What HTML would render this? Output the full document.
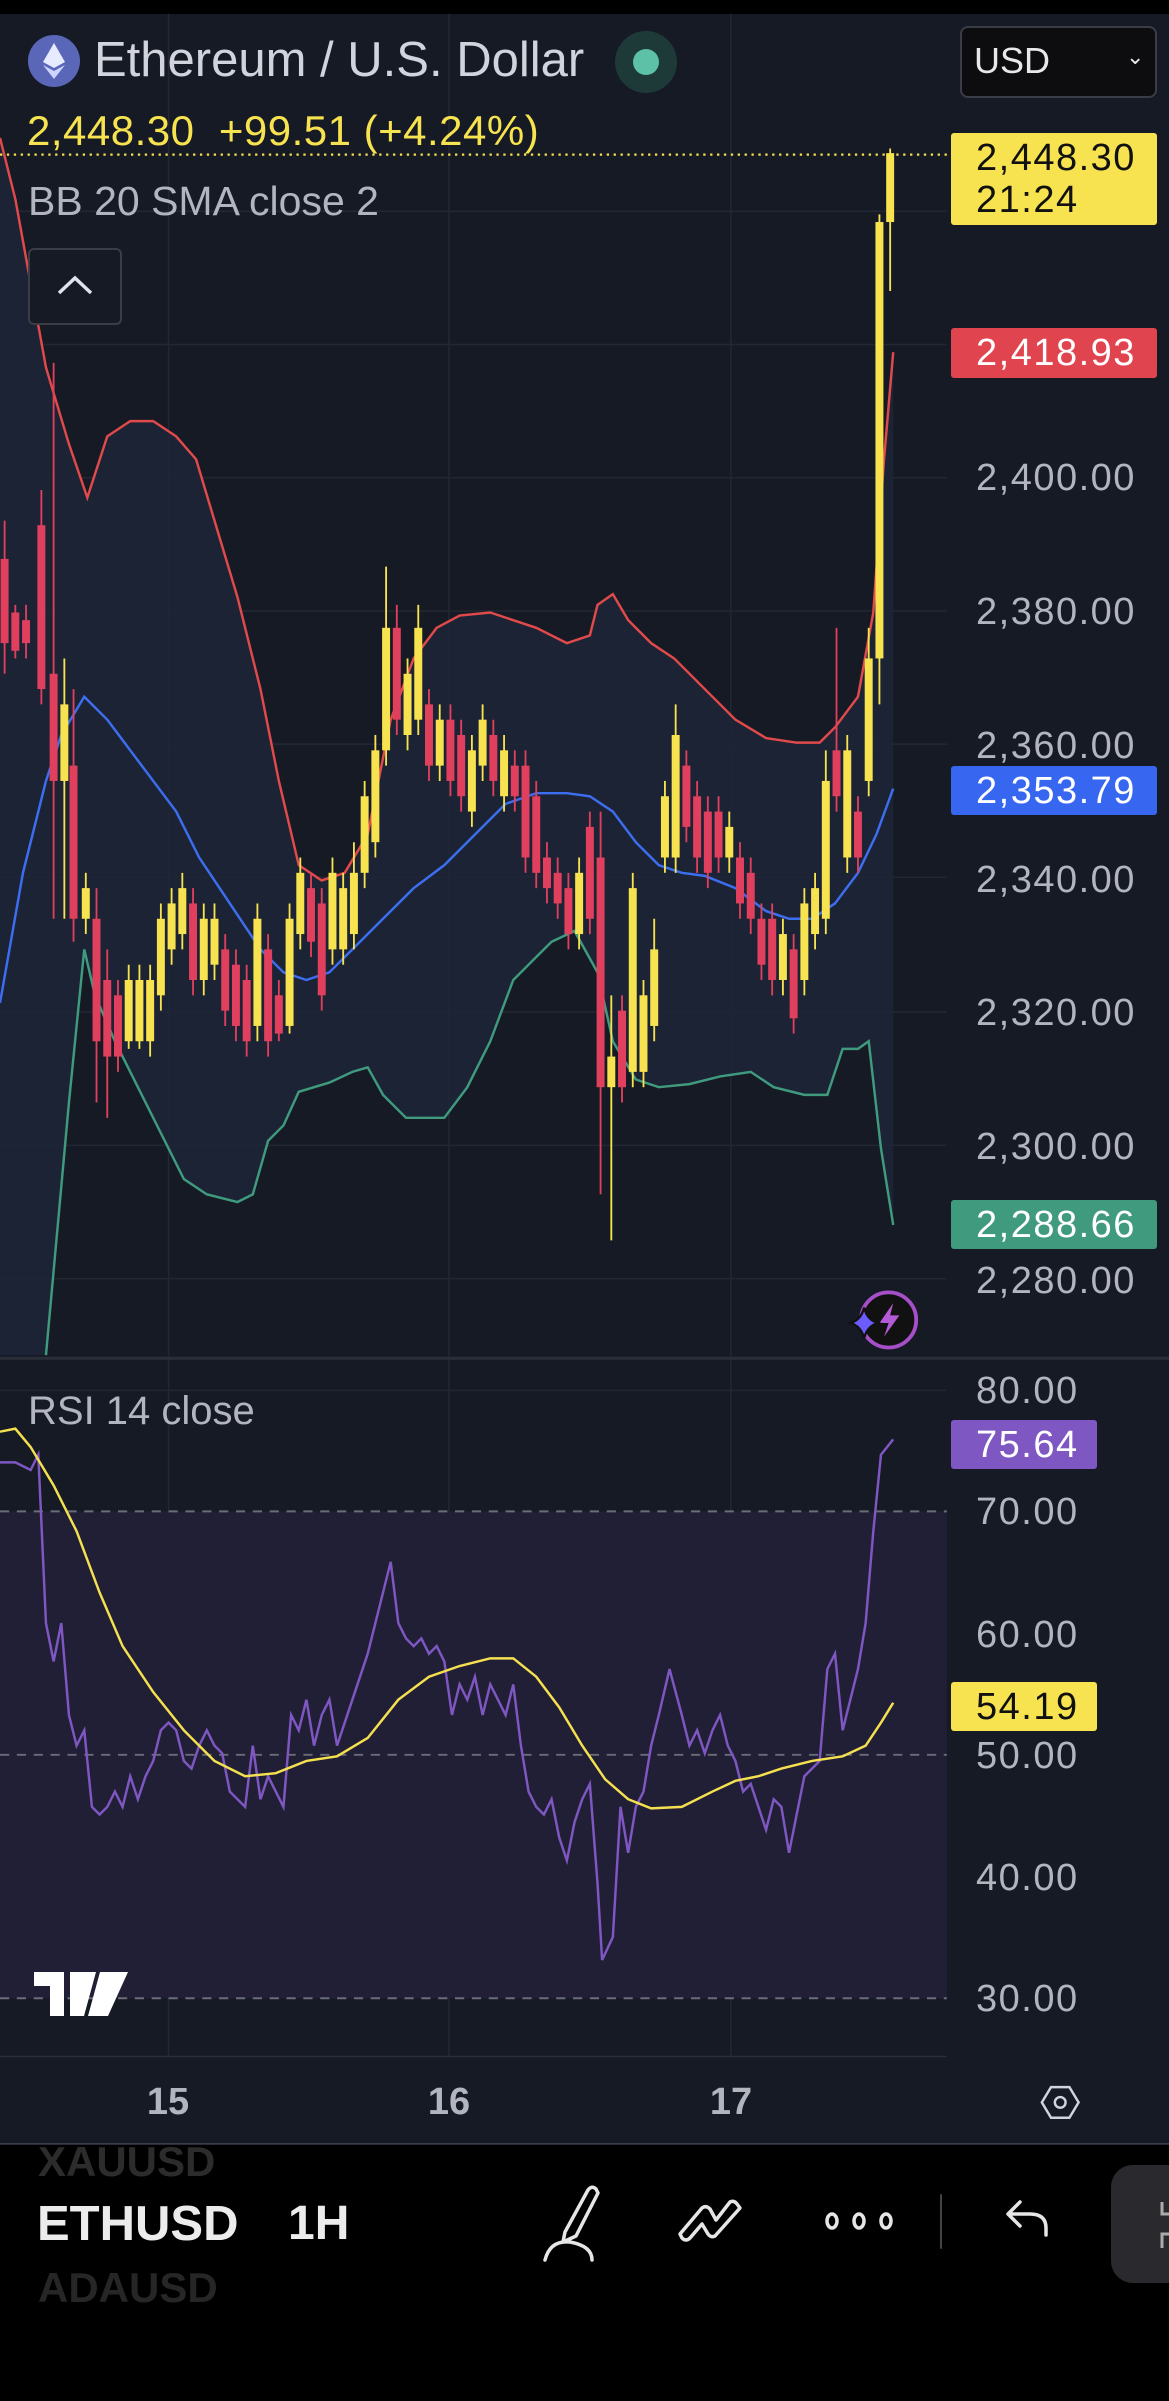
<!DOCTYPE html>
<html><head><meta charset="utf-8"><style>
*{margin:0;padding:0;box-sizing:border-box}
body{width:1169px;height:2401px;background:#000;position:relative;overflow:hidden;font-family:"Liberation Sans",sans-serif}
.a{position:absolute;white-space:nowrap}
.ax{position:absolute;left:976px;font-size:38px;color:#b2b5be;letter-spacing:1.5px;line-height:42px}
.badge{position:absolute;left:951px;font-size:38px;letter-spacing:1.5px;line-height:42px;padding-left:25px;border-radius:3px}
</style></head><body>
<div class="a" style="left:0;top:14px;width:1169px;height:2131px;background:#161a25"></div>
<svg class="a" style="left:0;top:0" width="1169" height="2401" viewBox="0 0 763 1568" preserveAspectRatio="none">
<g stroke="#232733" stroke-width="1">
<line x1="110" y1="9" x2="110" y2="1343"/><line x1="293" y1="9" x2="293" y2="1343"/><line x1="477" y1="9" x2="477" y2="1343"/>
<line x1="0" y1="138" x2="618" y2="138"/><line x1="0" y1="225" x2="618" y2="225"/><line x1="0" y1="312" x2="618" y2="312"/><line x1="0" y1="399" x2="618" y2="399"/><line x1="0" y1="486" x2="618" y2="486"/><line x1="0" y1="573" x2="618" y2="573"/><line x1="0" y1="661" x2="618" y2="661"/><line x1="0" y1="748" x2="618" y2="748"/><line x1="0" y1="835" x2="618" y2="835"/>
<line x1="0" y1="908" x2="618" y2="908"/><line x1="0" y1="1067" x2="618" y2="1067"/><line x1="0" y1="1226" x2="618" y2="1226"/>
</g>
<line x1="0" y1="887" x2="763" y2="887" stroke="#2a2e39" stroke-width="2"/>
<line x1="0" y1="1343" x2="618" y2="1343" stroke="#2a2e39" stroke-width="1"/>
<line x1="0" y1="1400" x2="763" y2="1400" stroke="#3a3d45" stroke-width="1"/>
<polygon fill="#1d2638" opacity="0.8" points="0,90 10,130 30,240 45,290 57,325 70,285 85,275 100,275 115,285 128,300 140,340 155,390 170,450 182,510 195,565 210,575 225,570 240,545 255,470 270,430 285,410 300,402 320,400 335,405 350,410 370,420 385,415 390,395 400,388 410,405 425,420 440,430 460,450 480,470 500,482 520,485 535,485 545,475 560,455 570,400 577,300 583,230 583,800 575,750 567,680 560,685 550,685 540,715 525,715 505,710 490,700 470,703 450,708 430,710 415,705 400,680 390,635 375,608 360,615 350,625 335,640 320,680 305,710 290,730 265,730 250,715 240,697 230,700 215,707 195,713 185,735 175,745 165,780 155,785 135,780 120,770 105,740 90,710 75,680 62,650 55,620 45,720 30,885 0,885"/>
<rect x="0" y="987" width="618" height="318" fill="#211f35"/>
<g stroke="#6a6d78" stroke-width="1.3" stroke-dasharray="6,5"><line x1="0" y1="987" x2="618" y2="987"/><line x1="0" y1="1146" x2="618" y2="1146"/><line x1="0" y1="1305" x2="618" y2="1305"/></g>
<line x1="0" y1="101" x2="618" y2="101" stroke="#f5e050" stroke-width="1.5" stroke-dasharray="1.5,3"/>
<g fill="none" stroke-width="1.6">
<polyline stroke="#e04a4a" points="0,90 10,130 30,240 45,290 57,325 70,285 85,275 100,275 115,285 128,300 140,340 155,390 170,450 182,510 195,565 210,575 225,570 240,545 255,470 270,430 285,410 300,402 320,400 335,405 350,410 370,420 385,415 390,395 400,388 410,405 425,420 440,430 460,450 480,470 500,482 520,485 535,485 545,475 560,455 570,400 577,300 583,230"/>
<polyline stroke="#3d6ef0" points="0,655 15,570 30,510 40,480 55,455 70,470 85,490 100,510 115,530 130,560 150,590 170,620 185,635 200,640 215,635 230,620 250,600 270,580 290,565 310,545 330,525 350,518 370,518 385,520 400,530 415,550 430,565 445,570 460,572 480,580 500,595 515,600 530,600 545,590 560,570 572,545 583,515"/>
<polyline stroke="#3f9a7e" points="30,885 45,720 55,620 62,650 75,680 90,710 105,740 120,770 135,780 155,785 165,780 175,745 185,735 195,713 215,707 230,700 240,697 250,715 265,730 290,730 305,710 320,680 335,640 350,625 360,615 375,608 390,635 400,680 415,705 430,710 450,708 470,703 490,700 505,710 525,715 540,715 550,685 560,685 567,680 575,750 583,800"/>
<polyline stroke="#7e57c2" points="0,955 10,955 20,960 25,950 30,1060 35,1085 40,1060 45,1120 50,1140 55,1130 60,1180 65,1185 70,1180 75,1170 80,1180 85,1160 90,1175 95,1160 100,1150 105,1130 110,1125 115,1130 120,1150 125,1155 130,1140 135,1130 140,1140 145,1145 150,1170 160,1180 165,1140 170,1175 175,1160 180,1170 185,1180 190,1120 195,1130 200,1110 205,1140 210,1120 215,1110 220,1140 230,1110 240,1080 245,1060 250,1040 255,1020 260,1060 265,1070 270,1075 275,1070 280,1080 285,1075 290,1085 295,1120 300,1100 305,1110 310,1095 315,1120 320,1100 325,1110 330,1120 335,1100 340,1140 345,1170 350,1180 355,1185 360,1175 365,1200 370,1215 375,1190 380,1175 385,1165 390,1230 393,1280 400,1265 405,1180 410,1210 415,1180 420,1170 425,1140 430,1120 437,1090 445,1120 450,1140 455,1130 460,1145 465,1130 470,1120 475,1140 480,1150 485,1170 490,1165 495,1180 500,1195 505,1175 510,1180 515,1210 520,1185 525,1160 530,1155 535,1150 540,1090 545,1080 550,1130 555,1110 560,1090 565,1060 570,1000 575,950 583,940"/>
<polyline stroke="#f5e050" points="0,935 10,933 20,945 35,970 50,1000 65,1040 80,1075 100,1105 120,1130 140,1150 160,1160 180,1158 200,1150 220,1147 240,1135 260,1110 280,1095 300,1088 320,1083 335,1083 350,1095 365,1115 380,1140 395,1162 410,1175 425,1181 445,1180 465,1170 480,1163 495,1160 510,1155 530,1150 550,1147 565,1140 575,1125 583,1112"/>
</g>
<g id="c"></g>
<g transform="translate(580,862)"><circle r="18" fill="#111" stroke="#a64fc9" stroke-width="2.5"/><path d="M3,-11 L-6,2 L0,2 L-3,11 L7,-3 L1,-3 Z" fill="#b35bd6"/><path d="M-16,-8 Q-14,0 -7,2 Q-14,4 -16,12 Q-18,4 -25,2 Q-18,0 -16,-8Z" fill="#6a5cff" stroke="#111" stroke-width="1.5"/></g>
<g transform="translate(692,1373)" fill="none" stroke="#d1d4dc" stroke-width="1.6"><polygon points="-6,-10 6,-10 12,0 6,10 -6,10 -12,0"/><circle r="3.5"/></g>
</svg>
<script>
var d=[[3,'r',365,420,340,440],[10,'r',400,425,395,430],[17,'r',405,420,395,430],[27,'r',343,450,320,460],[35,'r',440,510,237,600],[42,'y',460,510,430,600],[48,'r',500,600,450,615],[56,'y',580,600,570,610],[63,'r',600,680,580,720],[70,'r',640,690,620,730],[77,'r',650,690,640,700],[84,'y',640,680,630,685],[91,'y',640,680,630,685],[98,'y',640,680,630,690],[105,'y',600,650,590,660],[112,'y',590,620,580,630],[119,'y',580,610,570,620],[126,'r',590,640,580,650],[133,'y',600,640,590,650],[140,'y',600,630,590,640],[147,'r',620,660,610,670],[154,'r',630,670,620,680],[161,'r',640,680,630,690],[168,'y',600,670,590,680],[175,'r',620,680,610,690],[182,'r',650,675,640,680],[189,'y',600,670,590,675],[196,'y',570,610,560,620],[203,'r',580,615,570,625],[210,'r',590,650,580,660],[217,'y',570,620,560,630],[224,'y',580,620,570,630],[231,'y',570,610,550,620],[238,'y',520,570,510,580],[245,'y',490,550,480,560],[252,'y',410,490,370,500],[259,'r',410,470,395,480],[266,'y',440,480,430,490],[273,'y',410,470,395,480],[280,'r',460,500,450,510],[287,'y',470,500,460,510],[294,'r',470,510,460,520],[301,'r',480,520,470,530],[308,'y',490,530,480,540],[315,'y',470,500,460,510],[322,'r',480,510,470,520],[329,'y',490,520,480,530],[336,'r',500,520,490,530],[343,'r',500,560,490,570],[350,'r',520,570,510,580],[357,'r',560,580,550,590],[364,'r',570,590,560,600],[371,'r',580,610,570,620],[378,'y',570,610,560,620],[385,'r',540,600,530,610],[392,'r',560,710,530,780],[399,'y',690,710,650,810],[406,'r',660,710,650,720],[413,'y',580,700,570,710],[420,'y',650,700,640,710],[427,'y',620,670,600,680],[434,'y',520,560,510,570],[441,'y',480,560,460,570],[448,'r',500,540,490,550],[455,'r',520,560,510,570],[462,'r',530,570,520,580],[469,'r',530,560,520,570],[476,'y',540,560,530,570],[483,'r',560,590,550,600],[490,'r',570,600,560,610],[497,'r',600,630,590,640],[504,'r',600,640,590,650],[511,'y',610,640,600,650],[518,'r',620,665,610,675],[525,'y',590,640,580,650],[532,'y',580,610,570,620],[539,'y',510,600,490,610],[546,'r',490,520,410,530],[553,'y',490,560,480,570],[560,'r',530,560,520,570],[567,'y',430,510,410,520],[574,'y',145,430,140,460],[581,'y',100,145,97,190]];
var s='';d.forEach(function(c){var col=c[1]=='y'?'#f7e34f':'#e0405e';s+='<line x1="'+c[0]+'" x2="'+c[0]+'" y1="'+c[4]+'" y2="'+c[5]+'" stroke="'+col+'" stroke-width="1.2"/><rect x="'+(c[0]-2.6)+'" y="'+c[2]+'" width="5.2" height="'+(c[3]-c[2])+'" fill="'+col+'"/>';});
document.getElementById('c').innerHTML=s;
</script>
<div class="a" style="left:28px;top:35px;width:52px;height:52px;border-radius:50%;background:#5a67b8"></div>
<svg class="a" style="left:38px;top:41px" width="32" height="40" viewBox="0 0 32 40"><path d="M16,2 L27,21 L16,27 L5,21Z" fill="#e8eaff"/><path d="M16,30 L27,24 L16,38 L5,24Z" fill="#cfd3ff"/></svg>
<div class="a" style="left:94px;top:30px;font-size:49px;color:#d1d4dc;line-height:60px">Ethereum / U.S. Dollar</div>
<div class="a" style="left:615px;top:31px;width:62px;height:62px;border-radius:50%;background:#1e3a38"></div>
<div class="a" style="left:633px;top:49px;width:26px;height:26px;border-radius:50%;background:#5cc1a6"></div>
<div class="a" style="left:960px;top:26px;width:197px;height:72px;background:#0d0d0f;border:2px solid #3a3d45;border-radius:8px"></div>
<div class="a" style="left:974px;top:38px;font-size:36px;color:#e8e8ec;line-height:46px">USD</div>
<div class="a" style="left:1126px;top:44px;font-size:22px;color:#e8e8ec">&#8964;</div>
<div class="a" style="left:27px;top:106px;font-size:42px;color:#f7e34f;line-height:50px;letter-spacing:0.5px">2,448.30 &nbsp;+99.51 (+4.24%)</div>
<div class="a" style="left:28px;top:176px;font-size:41px;color:#b2b5be;line-height:50px">BB 20 SMA close 2</div>
<div class="a" style="left:28px;top:248px;width:94px;height:77px;border:2px solid #3a3d45;border-radius:6px;background:#161a25"></div>
<svg class="a" style="left:56px;top:274px" width="38" height="22"><polyline points="3,19 19,4 35,19" fill="none" stroke="#e0e3eb" stroke-width="3.5"/></svg>
<div class="a" style="left:28px;top:1386px;font-size:40px;color:#b2b5be;line-height:50px">RSI 14 close</div>
<svg class="a" style="left:34px;top:1968px" width="96" height="52"><path d="M0,4 H30 V48 H16 V18 H0Z M36,4 H62 L50,48 H36Z" fill="#fff"/><circle cx="48" cy="12" r="8" fill="#fff"/><path d="M66,4 H94 L74,48 H54Z" fill="#fff"/></svg>
<div class="ax" style="top:457px">2,400.00</div>
<div class="ax" style="top:591px">2,380.00</div>
<div class="ax" style="top:725px">2,360.00</div>
<div class="ax" style="top:859px">2,340.00</div>
<div class="ax" style="top:992px">2,320.00</div>
<div class="ax" style="top:1126px">2,300.00</div>
<div class="ax" style="top:1260px">2,280.00</div>
<div class="ax" style="top:1370px">80.00</div>
<div class="ax" style="top:1491px">70.00</div>
<div class="ax" style="top:1614px">60.00</div>
<div class="ax" style="top:1735px">50.00</div>
<div class="ax" style="top:1857px">40.00</div>
<div class="ax" style="top:1978px">30.00</div>
<div class="badge" style="top:133px;width:206px;height:92px;background:#f7e34f;color:#111;line-height:42px;padding-top:4px">2,448.30<br>21:24</div>
<div class="badge" style="top:328px;width:206px;height:50px;background:#e0454f;color:#fff;padding-top:4px">2,418.93</div>
<div class="badge" style="top:766px;width:206px;height:49px;background:#3766f0;color:#fff;padding-top:4px">2,353.79</div>
<div class="badge" style="top:1200px;width:206px;height:49px;background:#3f9a7e;color:#fff;padding-top:4px">2,288.66</div>
<div class="badge" style="top:1420px;width:146px;height:49px;background:#7e57c2;color:#fff;padding-top:4px">75.64</div>
<div class="badge" style="top:1682px;width:146px;height:49px;background:#f7e34f;color:#111;padding-top:4px">54.19</div>
<div class="a" style="left:136px;top:2081px;width:64px;text-align:center;font-size:38px;font-weight:bold;color:#b2b5be">15</div>
<div class="a" style="left:417px;top:2081px;width:64px;text-align:center;font-size:38px;font-weight:bold;color:#b2b5be">16</div>
<div class="a" style="left:699px;top:2081px;width:64px;text-align:center;font-size:38px;font-weight:bold;color:#b2b5be">17</div>
<div class="a" style="left:38px;top:2138px;width:200px;overflow:hidden;font-size:42px;font-weight:bold;color:#2c2c2c">XAUUSD</div>
<div class="a" style="left:37px;top:2196px;width:202px;overflow:hidden;font-size:49px;font-weight:bold;color:#ececec;line-height:56px">ETHUSD</div>
<div class="a" style="left:288px;top:2196px;font-size:48px;font-weight:bold;color:#ececec;line-height:56px">1H</div>
<div class="a" style="left:38px;top:2264px;width:200px;overflow:hidden;font-size:42px;font-weight:bold;color:#262626">ADAUSD</div>
<svg class="a" style="left:530px;top:2180px" width="640" height="110" fill="none" stroke="#e6e6e6" stroke-width="3.5" stroke-linecap="round" stroke-linejoin="round">
<path d="M35,52 L58,10 Q62,5 66,9 L68,13 L46,56 L33,62Z M15,80 Q20,60 40,62 Q62,66 62,80"/>
<path d="M150,54 L172,28 Q176,25 180,29 L186,40 L200,22 Q204,20 207,24 L210,28 L185,56 Q181,58 178,54 L172,44 L160,58 Q156,62 152,58Z"/>
<ellipse cx="302" cy="41" rx="5" ry="7"/><ellipse cx="329" cy="41" rx="5" ry="7"/><ellipse cx="356" cy="41" rx="5" ry="7"/>
<line x1="411" y1="15" x2="411" y2="68" stroke="#444" stroke-width="2"/>
<path d="M516,55 V48 Q516,34 500,34 H478 M490,22 L478,34 L490,46"/>
</svg>
<div class="a" style="left:1111px;top:2165px;width:80px;height:118px;border-radius:22px;background:#2a2a2e"></div>
<svg class="a" style="left:1150px;top:2200px" width="19" height="50" fill="none" stroke="#aaa" stroke-width="3"><path d="M12,2 V14 H19 M12,48 V34 H19"/></svg>
</body></html>
